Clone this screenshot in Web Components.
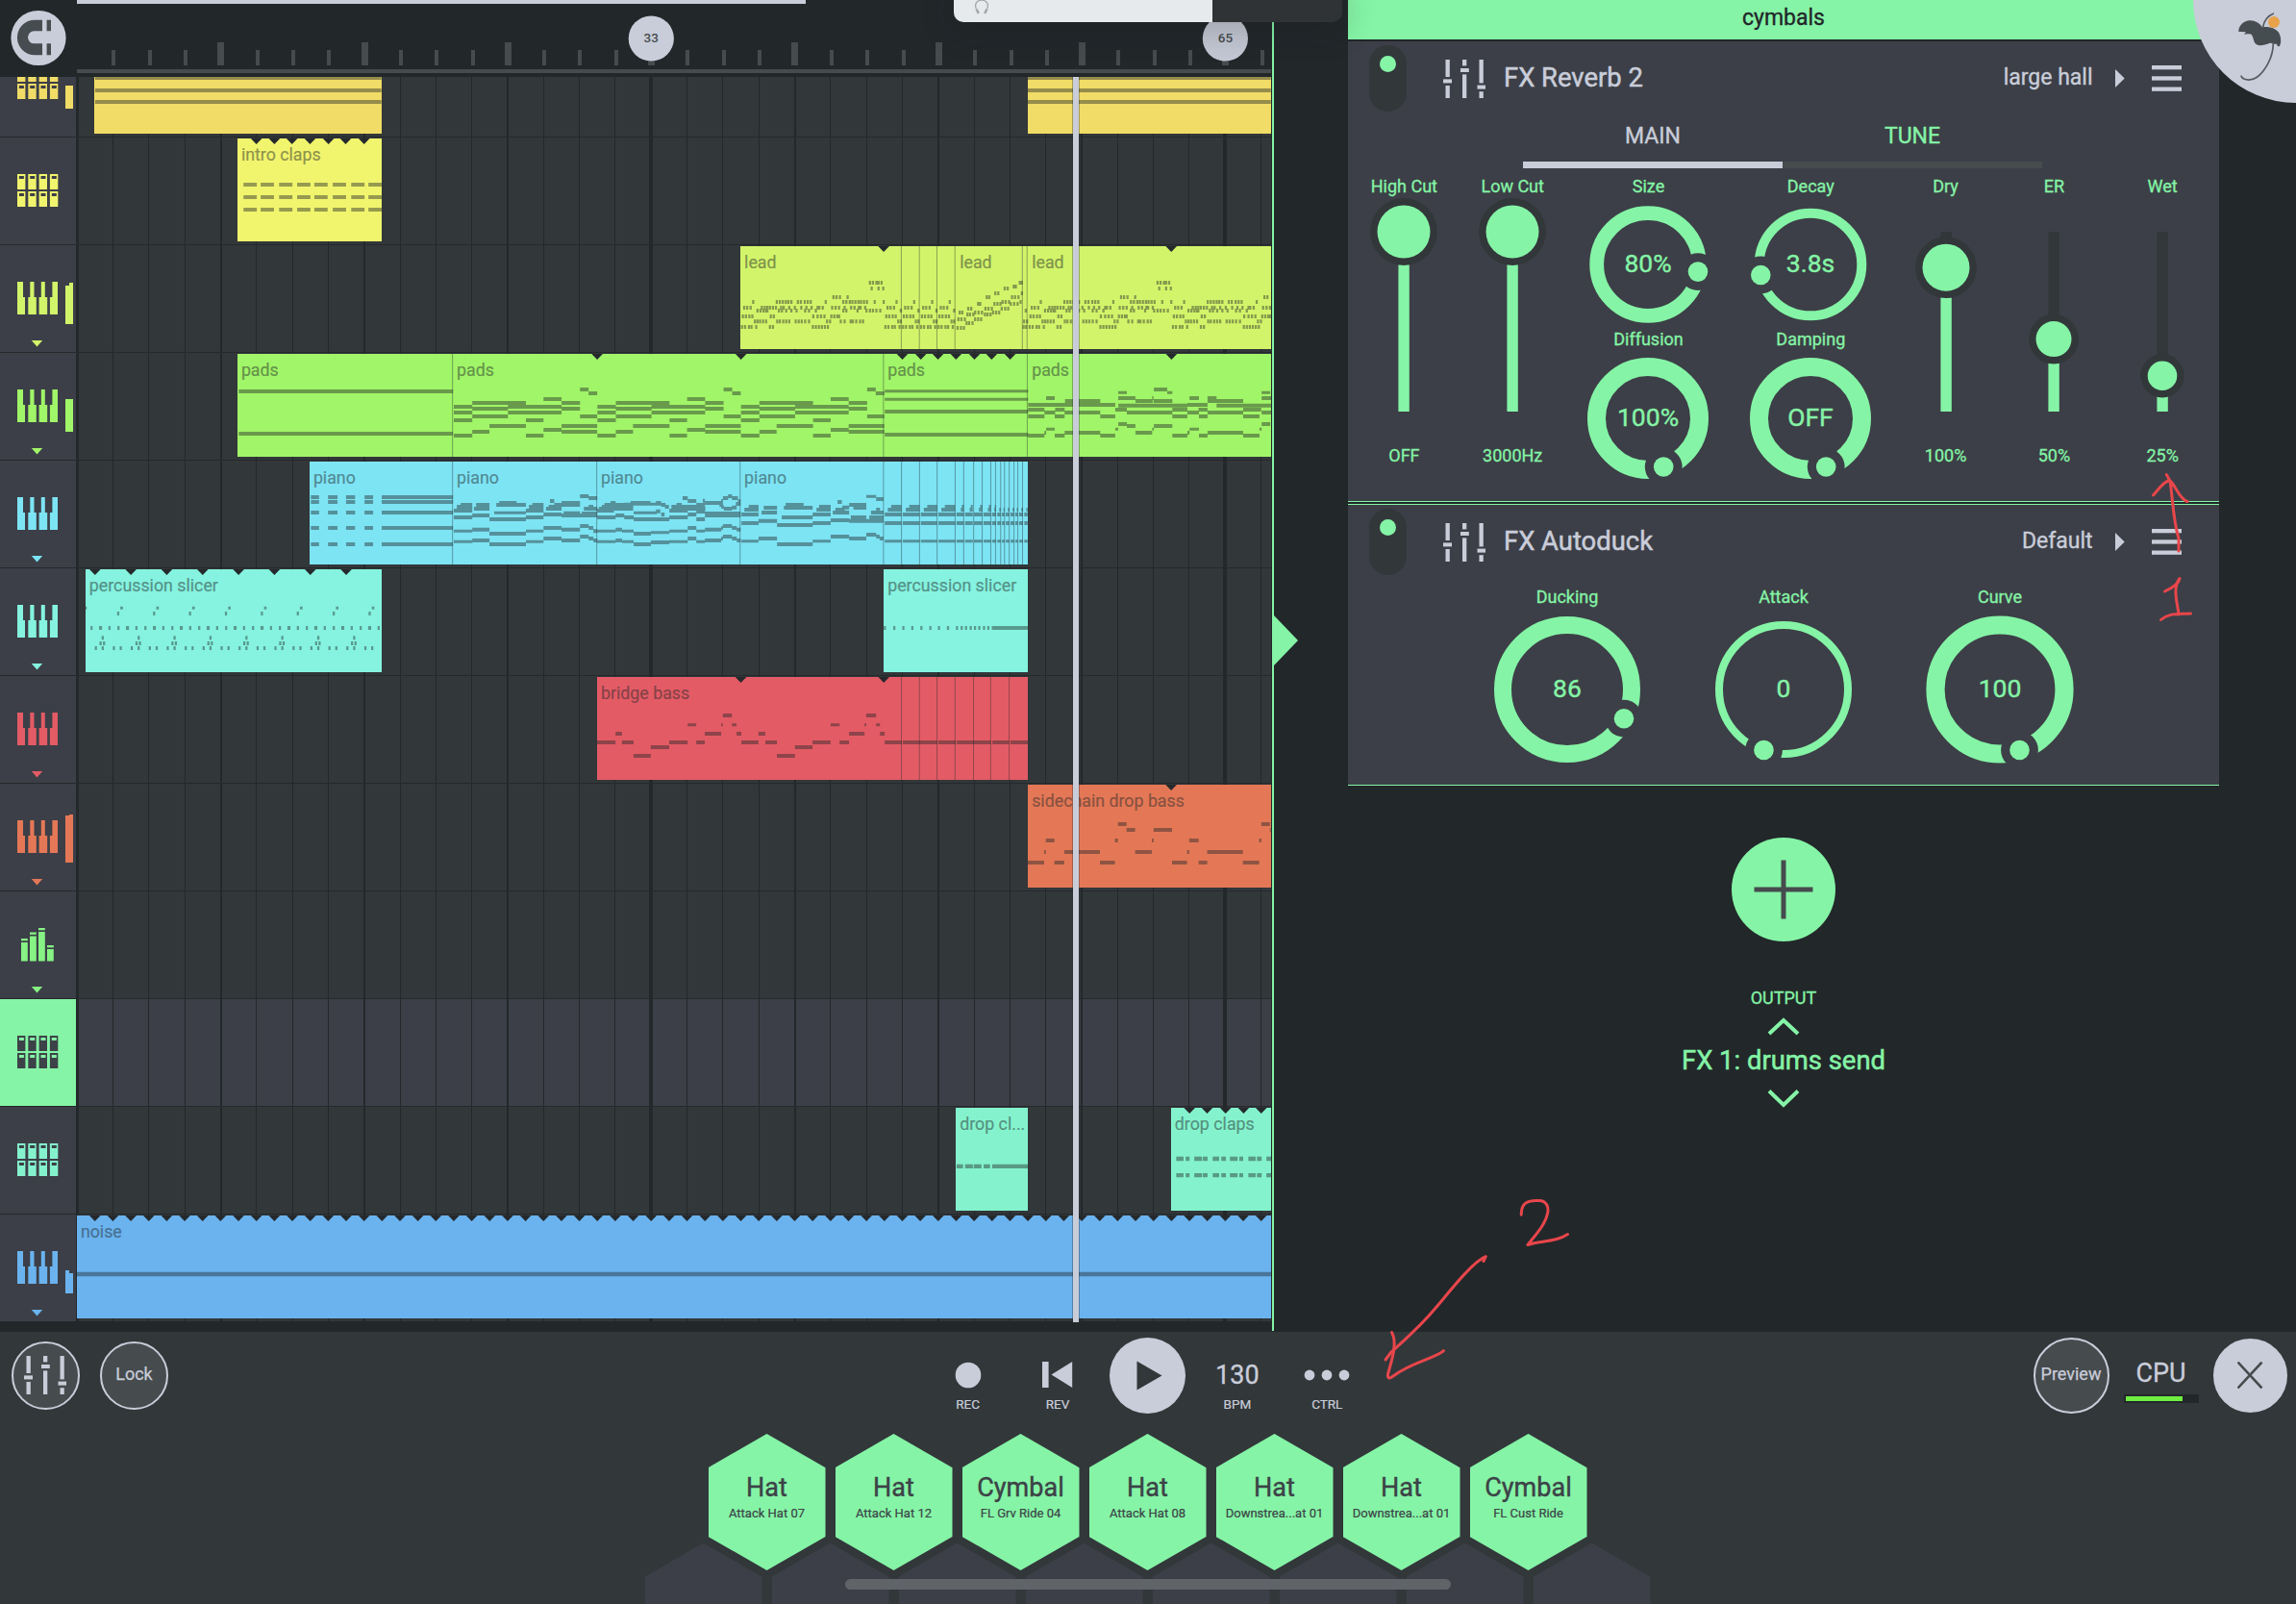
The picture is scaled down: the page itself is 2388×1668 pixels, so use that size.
<!DOCTYPE html>
<html lang="en">
<head>
<meta charset="utf-8">
<title>Song editor</title>
<style>
html,body{margin:0;height:100%;overflow:hidden}
body{font-family:Roboto,"Liberation Sans",sans-serif;background:#22272a;color:#c9cdd9;
--dark:#22272a;--base:#32373a;--panel:#3c3f47;--mid:#464b4e;--accent:#85f4a6;--light:#c9cdd9}
</style>
</head>
<body>
<daw-app></daw-app>
<script>
const define = (name, template, setup) => customElements.define(name, class extends HTMLElement {
  connectedCallback() {
    if (this.shadowRoot) return;
    const root = this.attachShadow({ mode: 'open' });
    root.innerHTML = typeof template === 'function' ? template(this) : template;
    if (setup) setup(this, root);
  }
});

/* ---------- song data ---------- */
/* Horizontal positions are in ticks, 2.24 ticks per pixel. Notes read "start end pitch". */
const TPP = 2.24, PAGE = 1568, LEFT = 79;
const px = t => t / TPP;
const notes = (str, off = 0) => str.split(';').filter(s => s.trim()).map(s => {
  const [a, b, y, h] = s.trim().split(/\s+/).map(Number); return [a + off, b + off, y, h || 12];
});
const rows = (obj, off = 0, w = 5, h = 12) => Object.entries(obj).flatMap(([y, xs]) => xs.map(x => [x + off - w / 2, x + off + w / 2, +y, h]));
const range = (n, f) => Array.from({ length: n }, (_, i) => f(i));

const leadRiff = {
  1020:[4,11,20,26,37,69,76,169,176,183,190,197,204],
  1003:[34,40,46,53,60,86,92,100,107,114,129,136,143,151,160,202,209,234,243,257,262,270,279,286],
  987:[6,13,21,28,71,78,170,180,188,196,212,219,226,230],
  969:[40,47,54,60,63,90,97,107,119,131,151,160,176,240,247,273,294,302,309,317,326],
  960:[9,16,24,50,57,63,69,76,83,95,101,114,127,142,154,166,180,184,192,214,222,230,243,258,266,276,280,291],
  942:[30,85,92,99,106,112,119,134,141,150,157,164,199,240,247,255,261,268,275,281,288,295,313,334],
  927:[217,224,232,250], 900:[306,322,333], 882:[302,309,317,322,329]
};
const riffCut = n => Object.fromEntries(Object.entries(leadRiff).map(([y, xs]) => [y, xs.filter(x => x <= n)]));
const leadRun = {
  1023:[663,671,678],1008:[684,690,698],996:[665,672,680,704,711,718],981:[686,692,700,727,733,740],
  975:[668,674,704,712,720,746,753,760],963:[688,695,728,735,743,766,774,781],948:[711,716,749,756,763,787,795,803],
  942:[768,775,783,810],927:[731,737,790,797,805],915:[751,758,813],900:[773,780],894:[794,799],882:[808,813],1020:[817,823],1003:[818,825],969:[822]
};
const leadNotes = [
  ...rows(leadRiff, PAGE + 157), ...[491, 532, 574, 615].flatMap(x => rows(riffCut(41), PAGE + x)),
  ...rows(leadRun, PAGE), ...rows(leadRiff, PAGE + 827), ...rows(riffCut(231), PAGE + 1161)
];

const padRiff = "1057 1100 1269;1100 1225 1257;1100 1183 1275;1183 1308 1269;1266 1308 1245;1308 1351 1257;1308 1351 1275;1351 1371 1215;1371 1391 1227;1057 1100 1287;1100 1183 1299;1183 1308 1287;1351 1391 1299;1057 1100 1311;1225 1266 1311;1057 1100 1359;1100 1140 1347;1140 1225 1329;1225 1266 1359;1266 1308 1341;1308 1391 1329;1308 1391 1347";
const padDrop = "827 890 1263;913 1030 1263;890 913 1263;913 995 1251;869 889 1242;1037 1077 1242;1116 1119 1242;1077 1117 1251;1120 1151 1215;1151 1163 1225 9;1037 1057 1225 9;1119 1163 1251;1037 1198 1265;1203 1225 1242;1198 1245 1263;1245 1266 1242;1245 1328 1251;1266 1370 1265;1371 1391 1225 9;1371 1393 1242;1370 1393 1265;827 865 1278;890 912 1278;1030 1057 1278;1163 1198 1278;1224 1245 1278;1328 1370 1278;865 890 1287;912 995 1287;1057 1163 1287;1198 1225 1287;1245 1328 1287;1371 1393 1287;827 865 1299;889 912 1299;995 1030 1299;1163 1198 1299;1225 1245 1299;1328 1366 1299;1037 1057 1323;1057 1077 1329;1120 1163 1329;1371 1391 1323;869 889 1339 9;1030 1037 1339 9;1116 1120 1339 9;1203 1225 1339 9;1366 1371 1339 9;865 869 1350;912 995 1350;1077 1116 1350;1198 1203 1350;1245 1328 1350;827 865 1359;889 912 1359;995 1030 1359;1163 1198 1359;1225 1245 1359;1328 1366 1359";
const padNotes = [
  ...notes("556 1055 1221;556 1055 1353"), ...[0, 334.5, 669].flatMap(o => notes(padRiff, o)),
  ...notes("493 827 1220 9;493 827 1246 9;493 827 1284;493 827 1356", PAGE), ...notes(padDrop, PAGE)
];

const pianoIntro = [171, 186, 219, 267, 318].map(y => `724 743 ${y};764 786 ${y};806 827 ${y};849 869 ${y};889 1055 ${y}`).join(';');
const pianoTwo = "1057 1100 213;1064 1100 201;1073 1100 195;1104 1140 207;1109 1140 195;1156 1225 195;1163 1203 189;1225 1266 213;1232 1266 201;1240 1266 195;1272 1308 207;1278 1308 201;1281 1291 183;1291 1308 195;1308 1351 189;1308 1351 195;1351 1371 168;1371 1391 174;1360 1391 207;1371 1382 201;1151 1225 220 9;1225 1266 213;1266 1308 225;1313 1351 221;1308 1391 228;1355 1391 222;1057 1100 234;1100 1140 228;1140 1225 240;1225 1266 234;1057 1100 277 9;1100 1140 272;1140 1225 285;1225 1266 277 9;1266 1308 267;1308 1351 272;1351 1371 261;1371 1382 267;1382 1391 277;1057 1100 310 9;1100 1140 306;1140 1225 318;1225 1266 310 9;1266 1308 300;1308 1351 306;1351 1371 294;1371 1382 300;1382 1391 306";
const pianoThree = "1391 1430 213;1395 1475 207;1402 1460 201;1408 1475 195;1422 1434 189;1469 1515 189;1454 1540 193 9;1528 1540 189;1540 1550 195;1549 1558 201;1559 1568 213;1564 1568 201;1476 1530 220 9;1528 1538 215;1540 1548 225;1391 1434 234;1434 1454 228;1454 1476 234;1476 1559 240;1559 1568 234;1391 1434 277 9;1434 1449 272;1449 1476 277 9;1476 1516 285;1516 1559 281 9;1559 1568 277 9;1391 1434 310 9;1434 1449 306;1449 1476 310 9;1476 1516 318;1516 1559 312;1559 1568 310 9";
const pianoThreeEnd = "8 20 195;0 75 207;0 34 213;0 55 201;22 34 174;34 54 183;69 74 182;54 74 195;74 112 189;116 128 174;128 137 168;137 151 174;112 116 183;151 157 184;108 116 195;112 118 201;118 137 207;137 148 203;146 157 192;54 74 216;34 54 225;74 157 222;74 157 228;54 74 240;0 34 234;0 34 277 9;34 54 267;54 74 277 9;74 112 272;112 116 267;116 137 261;137 148 267;148 157 272;0 34 310 9;34 54 300;54 74 310 9;74 112 306;112 116 300;116 137 294;137 148 300;148 157 306";
const pianoFour = "166 199 210;176 199 201;159 199 225;159 199 252;159 199 308 9;211 242 204;206 242 219;199 242 245;199 242 300;262 304 195;258 325 204;253 325 234;242 325 258;242 325 318;340 367 201;334 367 210;325 367 225;325 367 252;325 367 308 9;383 393 186;372 410 219;378 400 210;394 410 203;367 410 243;367 410 294;410 450 195;420 450 204;414 450 234;410 490 245;410 450 300;450 473 169 9;473 490 177;473 482 210;461 490 219;457 490 234;450 473 288;473 481 294;481 490 300";
const stutter = [493,535,577,618,660,680,701,723,743,755,766,775,786,797,806,818,829];
const pianoStutter = range(16, i => { const a = stutter[i], b = Math.min(stutter[i + 1] - 3, 827), w = b - a, k = w > 30;
  return `${a} ${b} 225;${a} ${b} 252;${a} ${b} 308 9;${k ? a + 7 : b - w * .4} ${b} 210;${k ? a + 15 : b - w * .25} ${b} ${k ? 201 : i < 9 ? 201 : 210}`; }).join(';');
const pianoNotes = [...notes(pianoIntro), ...notes(pianoTwo), ...notes(pianoThree), ...notes(pianoThreeEnd, PAGE), ...notes(pianoFour, PAGE), ...notes(pianoStutter, PAGE)];

const percNotes = [
  ...range(33, i => { const x = 213 + i * 20.9, w = i % 3 === 1 ? 7 : 5; return [x - w / 2, Math.min(889, x + w / 2), 579, 12]; }),
  [199, 202, 517, 9],
  ...range(8, i => 83.7 * i).flatMap(o => [...rows({ 534:[275], 610:[239], 627:[234,242] }, o, 5), ...rows({ 517:[283] }, o, 6, 9), ...rows({ 642:[223,239,265,281] }, o, 5)])
];
const percRoll = [...rows({ 579:[494,516,537,558,579,600,620,641,662,673,683,694,704,714,725,735] }, PAGE, 5), ...notes("743 827 579", PAGE)];
const bassNotes = [
  ...notes("1391 1434 936;1434 1449 909;1449 1476 936;1476 1516 978;1516 1559 951;1559 1568 936"),
  ...notes("0 34 936;34 54 881 9;54 74 936;74 112 909;112 116 881 9;116 137 852;137 148 881 9;148 159 909;159 199 936;199 215 909;215 242 936;242 284 978;284 325 951;325 367 936;367 388 881 9;388 410 936;410 446 909;446 450 881 9;450 473 852;473 482 881 9;482 493 909;493 533 936;535 616 936;618 659 936;661 741 936;744 783 936;786 827 936", PAGE)
];
const dropBass = notes("827 865 1311;865 869 1278;869 889 1242;889 912 1311;912 995 1278;995 1030 1311;1030 1037 1242;1037 1057 1191;1057 1077 1209;1077 1116 1278;1116 1120 1242;1120 1163 1209;1163 1198 1311;1198 1203 1278;1203 1225 1242;1225 1245 1311;1245 1328 1278;1328 1366 1311;1366 1371 1242;1371 1391 1191;1391 1393 1209", PAGE);
const clapNotes = [576, 615, 654].flatMap(y => notes([567,607,650,692,732,775,818,858].map(x => `${x} ${x + 31} ${y}`).join(';')));
const dropClaps = [770, 818].flatMap(y => notes([[1172,1189],[1194,1203],[1214,1232],[1234,1245],[1257,1272],[1277,1288],[1297,1315],[1319,1328],[1340,1357],[1360,1371],[1382,1393]].map(p => `${p[0]} ${p[1]} ${y}`).join(';'), PAGE));
const P = xs => xs.map(x => x + PAGE);
const END = PAGE + 1393;

const TRACKS = [
  { color:'#f0dc66', icon:'pads', meter:[24,24], origin:90, clips:[
    { a:220, b:889, notes:notes("222 889 243;222 889 282;222 889 318") },
    { a:PAGE+827, b:END, notes:notes("827 1393 243;827 1393 282;827 1393 318", PAGE) }] },
  { color:'#f1f56d', icon:'pads', origin:426, clips:[
    { a:553, b:889, labels:[[553,'intro claps']], cuts:[597,639,680,722,765,805,848], notes:clapNotes }] },
  { color:'#d2f46a', icon:'keys', meter:[40,43], more:1, origin:762, clips:[
    { a:PAGE+157, b:END, labels:[[PAGE+157,'lead'],[PAGE+659,'lead'],[PAGE+827,'lead']], cuts:P([491,1161]), lines:P([532,574,615,657,814,825]), notes:leadNotes }] },
  { color:'#a1f568', icon:'keys', meter:[34,34], more:1, origin:1098, clips:[
    { a:553, b:END, labels:[[553,'pads'],[1055,'pads'],[PAGE+491,'pads'],[PAGE+827,'pads']], cuts:[1391, ...P([158,534,577,617,659,702,742,785,1161])], lines:[1054, ...P([490,825])], notes:padNotes }] },
  { color:'#7de4f4', icon:'keys', more:1, origin:54, clips:[
    { a:721, b:PAGE+827, labels:[[721,'piano'],[1055,'piano'],[1391,'piano'],[PAGE+157,'piano']], lines:[1054,1390, ...P([156,490,532,574,615,657,677,700,720,740,751,763,772,783,794,803,814])], notes:pianoNotes }] },
  { color:'#85f3df', icon:'keys', more:1, origin:390, clips:[
    { a:199, b:889, labels:[[199,'percussion slicer']], cuts:range(8, i => 221 + 83.6 * i), notes:percNotes },
    { a:PAGE+491, b:PAGE+827, labels:[[PAGE+491,'percussion slicer']], notes:percRoll }] },
  { color:'#e35b65', icon:'keys', more:1, origin:726, clips:[
    { a:1391, b:PAGE+827, labels:[[1391,'bridge bass']], cuts:P([158,491]), lines:P([532,574,615,657,700,740,783]), notes:bassNotes }] },
  { color:'#e47856', icon:'keys', meter:[49,50], more:1, origin:1062, clips:[
    { a:PAGE+827, b:END, labels:[[PAGE+827,'sidechain drop bass']], cuts:P([1161]), notes:dropBass }] },
  { color:'#86f384', icon:'bars', more:1, clips:[] },
  { color:'#85f4a6', icon:'pads', selected:1, clips:[] },
  { color:'#84f3cd', icon:'pads', origin:616, scale:2.8, clips:[
    { a:PAGE+659, b:PAGE+827, labels:[[PAGE+659,'drop cl...']], notes:notes("661 676 792;681 699 792;701 719 792;724 739 792;744 827 792", PAGE) },
    { a:PAGE+1160, b:END, labels:[[PAGE+1160,'drop claps']], cuts:P([1203,1244,1287,1329,1370]), notes:dropClaps }] },
  { color:'#6ab3ef', icon:'keys', meter:[24,21], more:1, origin:929.6, scale:2.8, clips:[
    { a:179, b:END, labels:[[179,'noise']], cuts:range(66, i => 221 + 41.8 * i), notes:notes("179 2961 1106") }] }
];

/* ---------- icons ---------- */
const rect = (x, y, w, h, f = '') => `<rect x="${x}" y="${y}" width="${w}" height="${h}" ${f}/>`;
const KEY_X = [0, 11.3, 22.6, 33.9];
const ICONS = {
  keys: `<path d="M0 0H6V16H8V34H0ZM13.3 0H17.5V16H19.8V34H11.3V16H13.3ZM24.8 0H28.8V16H31.2V34H22.6V16H24.8ZM36.4 0H42V34H33.9V16H36.4Z" fill="currentColor"/>`,
  pads: [0, 18].map(y => KEY_X.map(x => rect(x, y, 8.4, 16, 'fill="currentColor"') + rect(x + 1.9, y + 2, 5, 3, 'fill="var(--hole,#3c3f47)"')).join('')).join(''),
  bars: [[4, 15, 11], [13, 8.5, 4.5], [22, 4, 0], [31, 22, 18]].map(([x, t, c]) => rect(x, t, 6.8, 34.5 - t, 'fill="currentColor"') + rect(x, c, 6.8, 2.3, 'fill="currentColor"')).join('')
};
const MIXER = `<svg width="44" height="40" viewBox="0 0 44 40" fill="#c9cdd9">
${rect(2.5,0,4.3,18)}${rect(2.5,27,4.3,13)}${rect(0,20.4,9,4)}
${rect(20,0,4.3,6.4)}${rect(20,15.4,4.3,24.6)}${rect(18,9,8.8,4)}
${rect(37.5,0,4.3,24.4)}${rect(37.5,33.2,4.3,6.8)}${rect(35.5,26.6,8.5,4)}</svg>`;

/* ---------- timeline ---------- */
define('midi-clip', '<style>:host{position:absolute;top:1px;height:107px;overflow:hidden}svg{position:absolute;inset:0}span{position:absolute;top:6px;font-size:17.8px;line-height:21px;white-space:nowrap;color:#22272a;opacity:.48;-webkit-text-stroke:.2px #22272a}</style><svg></svg>', (el, root) => {
  const { clip: c, track: t } = el, s = t.scale || 3, w = px(c.b - c.a);
  el.style.cssText = `left:${px(c.a) - LEFT}px;width:${w}px;background:${t.color}`;
  const X = v => px(v - c.a);
  const d = (c.notes || []).map(([a, b, y, h]) => `M${X(a).toFixed(2)} ${((y - h / 2 - t.origin) / s - 2).toFixed(2)}h${px(b - a).toFixed(2)}v${(h / s).toFixed(2)}h${(-px(b - a)).toFixed(2)}z`).join('');
  const svg = root.querySelector('svg');
  svg.setAttribute('width', w); svg.setAttribute('height', 107);
  svg.innerHTML = `<path d="${d}" fill="#22272a" fill-opacity=".44"/>` +
    (c.lines || []).map(v => rect(X(v) - .5, 0, 1, 107, 'fill="#22272a" fill-opacity=".4"')).join('') +
    (c.cuts || []).map(v => `<path d="M${X(v) - 5.8} 0h11.6l-5.8 6z" fill="#25292c"/>`).join('');
  for (const [x, text] of c.labels || []) {
    const n = document.createElement('span');
    n.textContent = text; n.style.left = X(x) + 4 + 'px'; root.append(n);
  }
});

define('track-head', '<style>:host{display:flex;flex:none;width:79px;height:111px;background:var(--panel);position:relative}:host([selected]){background:var(--accent);color:#3c4247!important;--hole:var(--accent)}svg{overflow:visible}</style><svg width="79" height="111"></svg>', (el, root) => {
  const t = el.track;
  el.style.color = t.color;
  const m = t.meter;
  root.querySelector('svg').innerHTML = `<g transform="translate(18 38)">${ICONS[t.icon]}</g>` +
    (m ? rect(68, 82 - m[0], 4, m[0], 'fill="currentColor"') + rect(72, 82 - m[1], 4, m[1], 'fill="currentColor"') : '') +
    (t.more ? '<path d="M32.8 99H44.2L38.5 105.5Z" fill="currentColor"/>' : '');
});

define('track-lane', '<style>:host{display:flex;height:111px;border-top:1px solid #25292c}.lane{position:relative;flex:1;overflow:visible;background:var(--base)}:host([selected]) .lane{background:var(--panel)}.grid{display:block}</style><div class="lane"></div>', (el, root) => {
  const t = el.track, lane = root.querySelector('.lane'), head = document.createElement('track-head');
  head.track = t;
  if (t.selected) { el.setAttribute('selected', ''); head.setAttribute('selected', ''); }
  root.insertBefore(head, lane);
  lane.innerHTML = `<svg class="grid" width="1243" height="111" fill="#23282b">` + rect(0, 0, 3, 111) +
    range(33, i => i + 1).map(k => { const w = k % 16 === 0 ? 4 : k % 4 === 0 ? 2 : 1; return rect(Math.round(.9 + 37.31 * k - w / 2 + .4), 0, w, 111); }).join('') + '</svg>';
  for (const c of t.clips) {
    const n = document.createElement('midi-clip');
    n.clip = c; n.track = t; lane.append(n);
  }
});

define('time-ruler', () => `<style>:host{display:flex;height:80px;background:var(--dark)}.snap{width:80px}svg{display:block}text{font-size:13.5px;font-weight:500;fill:#464b4e;text-anchor:middle}</style>
<svg class="snap" width="80" height="80"><circle cx="40" cy="39.5" r="28.6" fill="#c9cdd9"/><path d="M44 20.7H36.2a18.3 18.3 0 0 0 0 36.6H44V45.3H35.5a6.5 6.5 0 0 1 0-13H44ZM48.6 20.7H53V32.3H48.6ZM48.6 45.3H53V57.3H48.6Z" fill="#464d50"/></svg>
<svg width="1242" height="80" fill="#464b4e">${rect(0,0,758,4,'fill="#c9cdd9"')}${rect(0,72,1242,4)}
${range(33, i => i + 1).map(k => { const x = .5 + 37.31 * k - (k > 20 ? 0 : .4); return k % 4 ? rect(Math.round(x - 1), 52, 4, 16) : rect(Math.round(x - 3), 44, 7, 24); }).join('')}
<circle cx="597.3" cy="40" r="23.6" fill="#c9cdd9"/><text x="597.3" y="44">33</text>
<circle cx="1194.4" cy="40" r="23.6" fill="#c3c7d3"/><text x="1194.4" y="44">65</text></svg>`);

define('time-line', `<style>:host{display:flex;flex-direction:column;width:1322px;height:1385px;position:relative;background:var(--dark)}
.lanes{height:1294px;overflow:hidden;display:flex;flex-direction:column;justify-content:flex-end}
track-lane{flex:none}
.play{position:absolute;left:1116px;top:80px;width:6px;height:1295px;background:var(--light);box-shadow:0 0 0 1px rgba(34,39,42,.35)}
.volume{position:absolute;left:992px;top:-12px;width:404px;height:35px;border-radius:10px;overflow:hidden;display:flex;background:#2f3335;z-index:3}
.volume div{width:269px;background:#e6eaed}
.shade{position:absolute;left:992px;top:-12px;width:404px;height:35px;border-radius:10px;box-shadow:0 6px 30px 6px rgba(24,26,28,.18);z-index:2}
.volume svg{position:absolute;left:21px;top:12px}</style>
<time-ruler></time-ruler><div class="lanes"></div><div class="play"></div><div class="shade"></div>
<div class="volume"><div></div><svg width="16" height="16" fill="none" stroke="#a5a8ab"><path d="M2.5 9.5C0 4 3 .2 8 .2S16 4 13.500 9.500" stroke-width="1.300"/><path d="M2.600 9.500l2.200 4.500M13.400 9.500l-2.200 4.500" stroke-width="2.600"/></svg></div>`, (el, root) => {
  const lanes = root.querySelector('.lanes');
  for (const t of TRACKS) { const n = document.createElement('track-lane'); n.track = t; lanes.append(n); }
});

/* ---------- effect rack ---------- */
define('fx-label', '<style>:host{display:block;text-align:center;font-size:18px;line-height:28px;font-weight:400;color:var(--accent);-webkit-text-stroke:.3px var(--accent)}</style><slot></slot>');

define('fx-fader', el => {
  const y = +el.getAttribute('pos'), r = +el.getAttribute('r');
  return `<style>:host{display:flex;flex-direction:column;align-items:center}fx-label{line-height:37px;padding-bottom:2px}fx-label.v{line-height:28px;margin-top:29.500px}svg{display:block;overflow:visible}</style>
<fx-label>${el.getAttribute('label')}</fx-label>
<svg width="80" height="216">${rect(34.4, 27, 11.4, 187, 'fill="#32373a"')}${rect(34.4, y, 11.4, 214 - y, 'fill="#85f4a6"')}
<circle cx="40" cy="${y}" r="${r + 7.4}" fill="#32373a"/><circle cx="40" cy="${y}" r="${r}" fill="#85f4a6"/></svg>
<fx-label class="v">${el.getAttribute('value')}</fx-label>`;
});

define('fx-dial', el => {
  const g = n => +el.getAttribute(n), r = g('r'), h = g('box');
  return `<style>:host{display:flex;flex-direction:column;align-items:center}fx-label{line-height:${g('head') - 2}px;padding-bottom:2px}svg{display:block;overflow:visible}text{font-size:26.5px;font-weight:400;text-anchor:middle;fill:#85f4a6;stroke:#85f4a6;stroke-width:.4}</style>
<fx-label>${el.getAttribute('label')}</fx-label>
<svg width="${h}" height="${h}" viewBox="${-h / 2} ${-h / 2} ${h} ${h}"><circle r="${r}" fill="none" stroke="#85f4a6" stroke-width="${g('ring')}"/>
<circle cx="${g('dx')}" cy="${g('dy')}" r="19.400" fill="#3c3f47"/><circle cx="${g('dx')}" cy="${g('dy')}" r="10.300" fill="#85f4a6"/><text y="7.500">${el.getAttribute('value')}</text></svg>`;
});

define('fx-panel', el => `<style>:host{display:block;background:var(--panel)}
header{display:flex;align-items:center;height:77px;padding:0 39px 0 22px}
.switch{width:39px;height:69px;border-radius:19.5px;background:var(--base);display:flex;justify-content:center;margin-right:38px}
.switch i{width:17px;height:17px;border-radius:50%;background:var(--accent);margin-top:10.500px}
h2{margin:0 auto 0 19px;font-size:27.400px;line-height:34px;font-weight:400;padding-bottom:1px;-webkit-text-stroke:.5px var(--light)}
.preset{font-size:23px;line-height:30px;padding-bottom:2px;margin-right:23.500px;-webkit-text-stroke:.35px var(--light)}
.arrow{margin-right:28px}</style>
<header><div class="switch"><i></i></div>${MIXER}<h2>${el.getAttribute('name')}</h2><div class="preset">${el.getAttribute('preset')}</div>
<svg class="arrow" width="10" height="19" fill="#c9cdd9"><path d="M0 0L9.700 9.500L0 19Z"/></svg>
<svg width="31" height="27" fill="#c9cdd9">${rect(0,0,31,4.3)}${rect(0,11.3,31,4.3)}${rect(0,22.500,31,4.3)}</svg></header><slot></slot>`);

define('fx-rack', `<style>:host{display:flex;flex-direction:column;width:906px}
.name{height:41px;line-height:37px;background:var(--accent);color:var(--dark);text-align:center;font-size:23px;margin-bottom:2px;-webkit-text-stroke:.35px var(--dark)}
fx-panel{border-bottom:1px solid var(--accent)}
.reverb{height:478px}
.duck{border-top:1px solid var(--accent);margin-top:2px;height:291px}
.tabs{display:flex;padding-left:182px}
.tab{width:270px;line-height:43px;box-sizing:border-box;text-align:center;font-size:23px;border-bottom:7px solid var(--mid);height:55px;color:var(--accent);-webkit-text-stroke:.35px var(--accent)}
.tab.on{border-color:var(--light);color:var(--light);-webkit-text-stroke-color:var(--light)}
.body{display:grid;grid-template-columns:112.800px 112.800px 168.800px 168.800px 112.800px 112.800px 112.800px;padding-left:2px}
.body>div{padding-left:1px}
.three{display:grid;grid-template-columns:repeat(3,225px);justify-content:center}
.out{display:flex;flex-direction:column;align-items:center;color:var(--accent)}
.add{margin:54px 1px 0 0}.out fx-label{margin:44.500px 0 5px}
.dest{font-size:27.400px;line-height:36px;margin:7px 0 10px;-webkit-text-stroke:.5px var(--accent)}
svg{display:block}</style>
<div class="name">cymbals</div>
<fx-panel class="reverb" name="FX Reverb 2" preset="large hall">
<div class="tabs"><div class="tab on">MAIN</div><div class="tab">TUNE</div></div>
<div class="body">
<fx-fader label="High Cut" value="OFF" pos="27" r="27.500"></fx-fader>
<fx-fader label="Low Cut" value="3000Hz" pos="27" r="27.500"></fx-fader>
<div><fx-dial label="Size" value="80%" head="39" box="122" r="53.300" ring="14.800" dx="52" dy="7.600"></fx-dial><fx-dial label="Diffusion" value="100%" head="36" box="126" r="53.500" ring="19" dx="16.200" dy="50.500"></fx-dial></div>
<div><fx-dial label="Decay" value="3.8s" head="39" box="122" r="53.300" ring="10" dx="-51.700" dy="11"></fx-dial><fx-dial label="Damping" value="OFF" head="36" box="126" r="53.500" ring="19" dx="16.200" dy="50.500"></fx-dial></div>
<fx-fader label="Dry" value="100%" pos="64.200" r="24.500"></fx-fader>
<fx-fader label="ER" value="50%" pos="138.600" r="18.500"></fx-fader>
<fx-fader label="Wet" value="25%" pos="176.800" r="15.300"></fx-fader>
</div></fx-panel>
<fx-panel class="duck" name="FX Autoduck" preset="Default">
<div class="three">
<fx-dial label="Ducking" value="86" head="40" box="150" r="67" ring="18" dx="59" dy="30.200"></fx-dial>
<fx-dial label="Attack" value="0" head="40" box="150" r="67" ring="8" dx="-20.500" dy="63"></fx-dial>
<fx-dial label="Curve" value="100" head="40" box="150" r="67" ring="19.200" dx="20.500" dy="63"></fx-dial>
</div></fx-panel>
<div class="out">
<svg class="add" width="108" height="108"><circle cx="54" cy="54" r="54" fill="#85f4a6"/><path d="M23.500 54H84.500M54 23.500V84.500" stroke="#464b4e" stroke-width="5"/></svg>
<fx-label>OUTPUT</fx-label>
<svg width="34" height="21" fill="none" stroke="#85f4a6" stroke-width="4"><path d="M2 18L17 4L32 18"/></svg>
<div class="dest">FX 1: drums send</div>
<svg width="34" height="22" fill="none" stroke="#85f4a6" stroke-width="4"><path d="M2 3.500L17 18L32 3.500"/></svg>
</div>`);

/* ---------- transport and pads ---------- */
define('round-button', '<style>:host{display:flex;align-items:center;justify-content:center;box-sizing:border-box;width:71px;height:71px;border-radius:50%;border:2px solid var(--light);background:#464b4e;font-size:18px;line-height:22px;-webkit-text-stroke:.25px var(--light)}:host([solid]){background:var(--light)}:host([large]){width:79px;height:79px}:host([text]){padding-bottom:3px}</style><slot></slot>');
define('transport-key', el => `<style>:host{display:flex;flex-direction:column;align-items:center;width:93.400px}.i{height:44px;display:flex;align-items:center;font-size:27px;-webkit-text-stroke:.3px var(--light)}.l{font-size:13.500px;line-height:16px;-webkit-text-stroke:.2px var(--light)}</style><div class="i"><slot></slot></div><div class="l">${el.getAttribute('label')}</div>`);
define('transport-bar', `<style>:host{display:grid;grid-template-columns:1fr 467px 1fr;height:90px;align-items:center}
div{display:flex;align-items:center}.l{padding-left:11.500px;gap:21.500px}.r{justify-content:flex-end;padding-right:9px}
.c{align-items:center;margin-left:-.500px}transport-key{padding-top:16px;margin-top:-1px}.p{width:93.400px;justify-content:center}
.cpu{flex-direction:column;width:78px;margin:0 15.500px 0 15px;font-size:27px;line-height:34px;padding-top:9px;-webkit-text-stroke:.3px var(--light)}
.bar{align-self:stretch;height:9px;margin-top:5px;background:var(--dark);padding:0 2px}.bar i{width:59.500px;height:5px;background:#6eee40}
svg{display:block}</style>
<div class="l"><round-button>${MIXER}</round-button><round-button text>Lock</round-button></div>
<div class="c"><transport-key label="REC"><svg width="28" height="28"><circle cx="14" cy="14" r="13.300" fill="#c9cdd9"/></svg></transport-key>
<transport-key label="REV"><svg width="32" height="27" fill="#c9cdd9"><path d="M0 0H6.600V27H0ZM31.200 0V27L9.500 13.500Z"/></svg></transport-key>
<div class="p"><svg width="79" height="79"><circle cx="39.500" cy="39.500" r="39.500" fill="#c9cdd9"/><path d="M28.500 24.500L54.500 39.500L28.500 54.500Z" fill="#32373a"/></svg></div>
<transport-key label="BPM">130</transport-key>
<transport-key label="CTRL"><svg width="48" height="12" fill="#c9cdd9"><circle cx="6" cy="6" r="5.400"/><circle cx="24" cy="6" r="5.400"/><circle cx="42" cy="6" r="5.400"/></svg></transport-key></div>
<div class="r"><round-button large text>Preview</round-button><div class="cpu">CPU<div class="bar"><i></i></div></div><round-button large solid style="width:77px;height:77px"><svg width="28" height="28" stroke="#464b4e" stroke-width="2.600"><path d="M.500 .500L25.500 27.500M25.500 .500L.500 27.500"/></svg></round-button></div>`);

define('hex-pad', el => `<style>:host{display:flex;flex-direction:column;align-items:center;flex:none;width:122px;height:142px;background:var(--accent);color:#3c4247;clip-path:polygon(50% 0,100% 24.800%,100% 75.300%,50% 100%,0 75.300%,0 24.800%)}:host([empty]){background:var(--panel)}
b{font-weight:400;font-size:27px;line-height:32px;margin-top:39.500px;-webkit-text-stroke:.4px #3c4247}span{font-size:13px;line-height:18px;margin-top:2.500px;white-space:nowrap;-webkit-text-stroke:.2px #3c4247}</style>${el.hasAttribute('empty') ? '' : `<b>${el.getAttribute('kind')}</b><span>${el.textContent}</span>`}`);
define('pad-grid', `<style>:host{display:flex;flex-direction:column;align-items:center;padding:16px 1px 0 0}div{display:flex;gap:10px}.back{margin-top:-28.500px}</style>
<div><hex-pad kind="Hat">Attack Hat 07</hex-pad><hex-pad kind="Hat">Attack Hat 12</hex-pad><hex-pad kind="Cymbal">FL Grv Ride 04</hex-pad><hex-pad kind="Hat">Attack Hat 08</hex-pad><hex-pad kind="Hat">Downstrea...at 01</hex-pad><hex-pad kind="Hat">Downstrea...at 01</hex-pad><hex-pad kind="Cymbal">FL Cust Ride</hex-pad></div>
<div class="back">${'<hex-pad empty></hex-pad>'.repeat(8)}</div>`);

/* ---------- overlays ---------- */
define('corner-badge', `<style>:host{position:absolute;right:0;top:0}svg{display:block}</style>
<svg width="107" height="108"><circle cx="107" cy="0" r="107" fill="#c9cdd9"/>
<path d="M47.300 33C47 27 53 21.300 59 21.300C65 21.500 69 24 71.700 28C79 27.500 86 29 89 33.800C91.500 38 92 44 90 48L88 48.300L86.700 45.500C84 46.500 82 44 80 44.800C75 46.500 69 48.500 66 46.300C62 44 63.500 38 60 35.500C57 35 55 35 53 36L55 33.300C52 33 50 33 47.300 33Z" fill="#464d50"/>
<path d="M72.500 28.500C73.500 22 78 16 83.300 14.200M83.300 45C83.500 60 74 75 66 80.500C60 84.500 52 83.500 50 79.200" fill="none" stroke="#565b62" stroke-width="1.700" stroke-linecap="round"/>
<circle cx="84" cy="23" r="6" fill="#e9a24a"/></svg>`);
define('ink-notes', `<style>:host{position:absolute;inset:0;pointer-events:none}</style>
<svg width="2388" height="1668" fill="none" stroke="#e8464b" stroke-width="3" stroke-linecap="round" stroke-linejoin="round">
<path d="M2253.300 493.600L2257.500 501M2239.500 515C2245 509 2249 502 2256 499.500C2262 502 2266 519 2275 521.500M2257 500C2260 520 2260 540 2266 560V573"/>
<path d="M2251.500 615C2258 612 2266 608 2267 601.500C2259 612 2265 628 2266 639M2247.500 644.500C2256 637 2266 639 2278.500 638"/>
<path d="M1582.200 1263.300C1582 1250 1590 1248 1600 1248.500C1609 1248 1611 1256 1609.500 1262C1607 1274 1597 1284 1589 1294.500C1602 1290 1618 1292 1630.500 1283.500"/>
<path d="M1543 1311.500L1545.300 1306.700C1532 1312 1510 1340 1495 1358C1477 1380 1458 1396 1447 1406L1441 1414"/>
<path d="M1447.500 1385.500C1454 1397 1447 1416 1443.500 1429C1443 1434 1445 1434 1449 1431C1469 1416 1492 1413 1501.500 1404.700"/></svg>`);

define('daw-app', `<style>:host{display:flex;flex-direction:column;position:relative;width:2388px;height:1668px;overflow:hidden;background:var(--dark);color:var(--light)}
.top{display:flex;height:1385px}.edge{width:2px;margin:23px 77px 1px 1px;background:var(--accent);position:relative}
.edge svg{position:absolute;left:2px;top:617px}
.bottom{height:283px;background:var(--base);overflow:hidden}
.home{position:absolute;left:879px;bottom:15px;width:630px;height:11px;border-radius:6px;background:#606469}
</style>
<div class="top"><time-line></time-line><div class="edge"><svg width="25" height="52"><path d="M0 0L25 26L0 52Z" fill="#85f4a6"/></svg></div><fx-rack></fx-rack></div>
<div class="bottom"><transport-bar></transport-bar><pad-grid></pad-grid></div>
<div class="home"></div><corner-badge></corner-badge><ink-notes></ink-notes>`);
</script>
</body>
</html>
